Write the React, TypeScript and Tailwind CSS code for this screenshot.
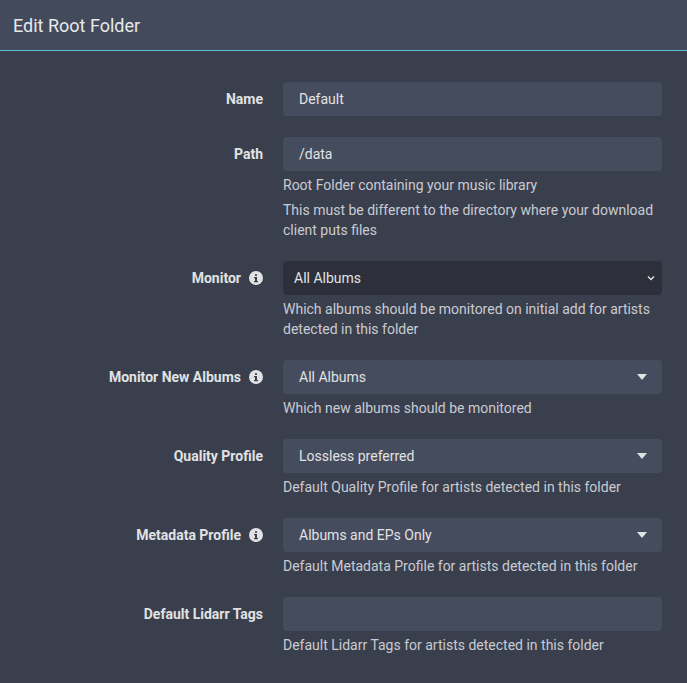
const Info = () => (
  <svg width="14" height="14" viewBox="0 0 14 14" className="ml-2 shrink-0">
    <circle cx="7" cy="7" r="7" fill="#e1e2e3" />
    <rect x="6" y="6" width="2" height="4.5" fill="#3a3f4e" />
    <rect x="5" y="10" width="4" height="1.2" fill="#3a3f4e" />
    <rect x="5" y="6" width="2" height="1.2" fill="#3a3f4e" />
    <circle cx="7" cy="4" r="1.1" fill="#3a3f4e" />
  </svg>
);

const Caret = () => (
  <svg width="10" height="6" viewBox="0 0 10 6"><path d="M0 0h10L5 6z" fill="#e1e2e3" /></svg>
);

function Row({ label, info, children, help }: { label: string; info?: boolean; children: React.ReactNode; help?: string[] }) {
  return (
    <div className="flex mb-[21px]">
      <div className="w-[263px] h-[34px] flex items-center justify-end font-bold text-[14px] text-[#e1e2e3]">
        {label}
        {info && <Info />}
      </div>
      <div className="ml-[20px] w-[379px]">
        {children}
        {help && (
          <div className="mt-[4px] flex flex-col gap-[5px]">
            {help.map((h) => (
              <div key={h} className="text-[14px] leading-[20px] text-[#c9cbd1]">{h}</div>
            ))}
          </div>
        )}
      </div>
    </div>
  );
}

const Input = ({ v }: { v: string }) => (
  <div className="h-[34px] rounded bg-[#454c5d] px-4 flex items-center text-[14px] text-[#e1e2e3]">{v}</div>
);
const Sel = ({ v }: { v: string }) => (
  <div className="h-[34px] rounded bg-[#454c5d] pl-4 pr-[15px] flex items-center justify-between text-[14px] text-[#e1e2e3]">
    {v}
    <Caret />
  </div>
);

export default function App() {
  return (
    <div className="w-[687px] h-[683px] bg-[#3a3f4e] overflow-hidden" style={{ fontFamily: "Roboto, sans-serif" }}>
      <div className="h-[51px] bg-[#434a5c] border-b border-[#5fc1d5] flex items-center px-[13px] text-[18px] text-[#e8e9ea]">
        Edit Root Folder
      </div>
      <div className="pt-[31px]">
        <Row label="Name"><Input v="Default" /></Row>
        <Row label="Path" help={["Root Folder containing your music library", "This must be different to the directory where your download client puts files"]}>
          <Input v="/data" />
        </Row>
        <Row label="Monitor" info help={["Which albums should be monitored on initial add for artists detected in this folder"]}>
          <div className="h-[34px] rounded bg-[#2d303b] pl-[11px] pr-[6px] flex items-center justify-between text-[14px] text-[#e1e2e3]">
            All Albums
            <svg width="10" height="10" viewBox="0 0 10 10"><path d="M2 3.5l3 3 3-3" stroke="#e1e2e3" strokeWidth="1.4" fill="none" /></svg>
          </div>
        </Row>
        <Row label="Monitor New Albums" info help={["Which new albums should be monitored"]}><Sel v="All Albums" /></Row>
        <Row label="Quality Profile" help={["Default Quality Profile for artists detected in this folder"]}><Sel v="Lossless preferred" /></Row>
        <Row label="Metadata Profile" info help={["Default Metadata Profile for artists detected in this folder"]}><Sel v="Albums and EPs Only" /></Row>
        <Row label="Default Lidarr Tags" help={["Default Lidarr Tags for artists detected in this folder"]}><Input v="" /></Row>
      </div>
    </div>
  );
}
